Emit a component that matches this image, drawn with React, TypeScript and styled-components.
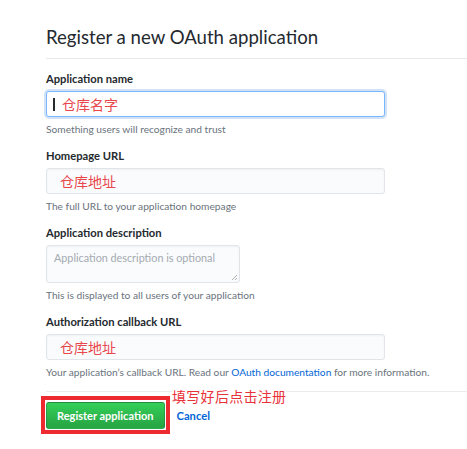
import styled, { createGlobalStyle } from "styled-components";

const GlobalStyle = createGlobalStyle`
    html, body {
        margin: 0;
        padding: 0;
        background: #fff;
    }
    body {
        font-family: Lato, "Liberation Sans", "Noto Sans CJK SC", sans-serif;
        color: #24292e;
    }
`;

const Page = styled.div`
    width: 467px;
    height: 449px;
    padding-left: 46px;
    box-sizing: border-box;
    overflow: hidden;
`;

const Header = styled.div`
    margin-top: 22px;
    padding-bottom: 6px;
    border-bottom: 1px solid #e6e8eb;
`;

const Title = styled.h2`
    margin: 0;
    font-size: 18.6px;
    font-weight: 400;
    line-height: 30px;
    color: #24292e;
`;

const Form = styled.div`
    display: flex;
    flex-direction: column;
    padding-top: 11px;
`;

const Group = styled.div`
    display: flex;
    flex-direction: column;
    align-items: flex-start;
    margin-bottom: 10px;
`;

const Label = styled.div`
    font-size: 11.2px;
    font-weight: 700;
    line-height: 18px;
    margin-bottom: 3px;
`;

const Field = styled.div<{ $focused?: boolean; $width?: number; $height?: number }>`
    box-sizing: border-box;
    width: ${(p) => p.$width ?? 339}px;
    height: ${(p) => p.$height ?? 26}px;
    display: flex;
    align-items: ${(p) => (p.$height ? "flex-start" : "center")};
    padding: ${(p) => (p.$height ? "4px 7px" : "0 13px")};
    border: 1px solid ${(p) => (p.$focused ? "#79b8ff" : "#e1e4e8")};
    border-radius: 3px;
    background: ${(p) => (p.$focused ? "#fff" : "#fafbfc")};
    box-shadow: ${(p) =>
        p.$focused ? "0 0 0 2px rgba(3, 102, 214, 0.18)" : "inset 0 1px 2px rgba(27, 31, 35, 0.05)"};
    position: relative;
`;

const Caret = styled.span`
    display: inline-block;
    width: 2px;
    height: 13px;
    background: #24292e;
    margin: 0 7px 0 -7px;
`;

const RedText = styled.span`
    font-family: "Noto Sans CJK SC", sans-serif;
    font-size: 14px;
    color: #e8474c;
    line-height: 1;
`;

const Placeholder = styled.span`
    font-size: 10.8px;
    color: #a3aab1;
    line-height: 16px;
`;

const Resize = styled.svg`
    position: absolute;
    right: 1px;
    bottom: 1px;
`;

const Note = styled.div`
    font-size: 10.2px;
    line-height: 16px;
    color: #6a737d;
    margin-top: 4px;
`;

const Link = styled.a`
    color: #0366d6;
    text-decoration: none;
`;

const Actions = styled.div`
    position: relative;
    display: flex;
    align-items: center;
    gap: 12px;
    margin-top: 1px;
    padding-top: 10px;
    border-top: 1px solid #eaecef;
`;

const PrimaryButton = styled.button`
    position: relative;
    height: 27px;
    padding: 0 10px;
    font-family: inherit;
    font-size: 11px;
    font-weight: 700;
    color: #fff;
    border: 1px solid rgba(27, 31, 35, 0.2);
    border-radius: 3px;
    background: linear-gradient(-180deg, #34d058 0%, #28a745 90%);

    &::after {
        content: "";
        position: absolute;
        top: -7px;
        bottom: -6px;
        left: -6px;
        right: -6px;
        border: 4px solid #ec2a30;
    }
`;

const CancelLink = styled.a`
    font-size: 11.2px;
    font-weight: 700;
    color: #0366d6;
`;

const Annotation = styled.span`
    position: absolute;
    left: 126px;
    top: -4px;
    font-family: "Noto Sans CJK SC", sans-serif;
    font-size: 14px;
    line-height: 16px;
    color: #e8323a;
    background: #fff;
    letter-spacing: 0.3px;
`;

function App() {
    return (
        <Page>
            <GlobalStyle />
            <Header>
                <Title>Register a new OAuth application</Title>
            </Header>
            <Form>
                <Group>
                    <Label>Application name</Label>
                    <Field $focused>
                        <Caret />
                        <RedText>仓库名字</RedText>
                    </Field>
                    <Note>Something users will recognize and trust</Note>
                </Group>
                <Group>
                    <Label>Homepage URL</Label>
                    <Field>
                        <RedText>仓库地址</RedText>
                    </Field>
                    <Note>The full URL to your application homepage</Note>
                </Group>
                <Group>
                    <Label>Application description</Label>
                    <Field $width={194} $height={38}>
                        <Placeholder>Application description is optional</Placeholder>
                        <Resize width="7" height="7" viewBox="0 0 7 7">
                            <path d="M6 1 L1 6 M6 4 L4 6" stroke="#999" strokeWidth="0.8" />
                        </Resize>
                    </Field>
                    <Note>This is displayed to all users of your application</Note>
                </Group>
                <Group>
                    <Label>Authorization callback URL</Label>
                    <Field>
                        <RedText>仓库地址</RedText>
                    </Field>
                    <Note>
                        Your application’s callback URL. Read our <Link>OAuth documentation</Link> for more
                        information.
                    </Note>
                </Group>
                <Actions>
                    <PrimaryButton>Register application</PrimaryButton>
                    <CancelLink>Cancel</CancelLink>
                    <Annotation>填写好后点击注册</Annotation>
                </Actions>
            </Form>
        </Page>
    );
}

export default App;
